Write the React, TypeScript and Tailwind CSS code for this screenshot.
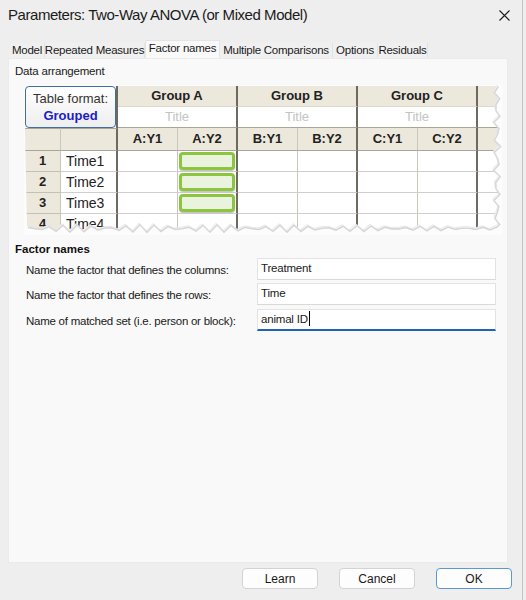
import React from "react";

const UI = "font-['Liberation_Sans',Arial,sans-serif]";
const ARIAL = "font-['Liberation_Sans',Arial,sans-serif]";

// Torn-paper edge for the sample sheet preview
function TornEdge({ w, h }: { w: number; h: number }) {
  const right: [number, number][] = [];
  const bottom: [number, number][] = [];
  const rx = w - 6;
  const by = h - 8;
  for (let y = 0; y <= by; y += 6) {
    const j = Math.sin(y * 1.7) * 2.2 + Math.cos(y * 0.63) * 1.4;
    right.push([rx + j, y]);
  }
  for (let x = rx; x >= 0; x -= 7) {
    const j = Math.sin(x * 1.3) * 2.4 + Math.cos(x * 0.41) * 1.5;
    bottom.push([x, by + j]);
  }
  const line = [...right, ...bottom];
  const inner = "M" + line.map((p) => p[0].toFixed(1) + " " + p[1].toFixed(1)).join(" L") + " L0 0 Z";
  const outer = `M-2 -2 L${w + 2} -2 L${w + 2} ${h + 2} L-2 ${h + 2} Z`;
  const edge = "M" + line.map((p) => p[0].toFixed(1) + " " + p[1].toFixed(1)).join(" L");
  return (
    <svg className="absolute left-0 top-0 pointer-events-none" width={w} height={h} viewBox={`0 0 ${w} ${h}`}>
      <path d={outer + " " + inner} fill="#fcfcfc" fillRule="evenodd" />
      <path d={edge} fill="none" stroke="#d6d6d6" strokeWidth="1.6" transform="translate(1 1.5)" />
      <path d={edge} fill="none" stroke="#e2e2e2" strokeWidth="0.8" />
    </svg>
  );
}

const thick = "border-r-2 border-r-[#6e6a5f]";
const thin = "border-r border-r-[#c9c6bd]";
const thinB = "border-b border-b-[#cfcfcf]";

function SheetPreview() {
  const sub = ["A:Y1", "A:Y2", "B:Y1", "B:Y2", "C:Y1", "C:Y2"];
  const rows = ["Time1", "Time2", "Time3", "Time4"];
  return (
    <div className="relative w-[478px] h-[150px] bg-[#fcfcfc] ml-[15px] mt-[6px] overflow-hidden">
      <div
        className={`absolute left-[1px] top-[1px] grid grid-cols-[36px_57px_60px_60px_60px_60px_60px_60px_40px] grid-rows-[21px_21px_23px_21px_21px_21px_21px] ${ARIAL}`}
      >
        {/* Table format button */}
        <div className={`col-span-2 row-span-2 ${thick} bg-[#fcfcfc]`}>
          <div className="h-full w-full rounded-[4px] border-[1.5px] border-[#3f6f9a] bg-gradient-to-b from-white to-[#eeeeee] flex flex-col items-center justify-center leading-[17px]">
            <span className="text-[13px] text-[#333]">Table format:</span>
            <span className="text-[13px] font-bold text-[#1c1cc8]">Grouped</span>
          </div>
        </div>
        {/* group headers */}
        {["Group A", "Group B", "Group C"].map((g) => (
          <div key={g} className={`col-span-2 bg-[#ece8dc] ${thick} border-b border-b-[#dcd8cc] flex items-center justify-center text-[13px] font-bold text-[#222]`}>
            {g}
          </div>
        ))}
        <div className="bg-[#ece8dc] border-b border-b-[#dcd8cc]" />
        {/* title row */}
        {[0, 1, 2].map((i) => (
          <div key={i} className={`col-span-2 bg-white ${thick} border-b border-b-[#a8a59b] flex items-center justify-center text-[13px] text-[#c4c4c4]`}>
            Title
          </div>
        ))}
        <div className="bg-white border-b border-b-[#a8a59b]" />
        {/* column header row */}
        <div className={`bg-[#ece8dc] ${thin} border-b border-b-[#a8a59b] border-t border-t-[#a8a59b]`} />
        <div className={`bg-[#ece8dc] ${thick} border-b border-b-[#a8a59b] border-t border-t-[#a8a59b]`} />
        {sub.map((s, i) => (
          <div
            key={s}
            className={`bg-[#ece8dc] ${i % 2 === 1 ? thick : thin} border-b border-b-[#a8a59b] flex items-center justify-center text-[13px] font-bold text-[#222]`}
          >
            {s}
          </div>
        ))}
        <div className="bg-[#ece8dc] border-b border-b-[#a8a59b]" />
        {/* data rows */}
        {rows.map((r, ri) => (
          <React.Fragment key={r}>
            <div className={`bg-[#ece8dc] ${thin} border-b border-b-[#c4c0b4] flex items-center justify-center text-[13px] font-bold text-[#222]`}>
              {ri + 1}
            </div>
            <div className={`bg-white ${thick} ${thinB} flex items-center pl-[5px] text-[14px] text-[#222]`}>{r}</div>
            {sub.map((s, i) => (
              <div key={s} className={`bg-white ${i % 2 === 1 ? thick : thin} ${thinB} relative`}>
                {s === "A:Y2" && ri < 3 && (
                  <div className="absolute left-[1px] top-[1px] right-[1px] bottom-[1px] rounded-[4px] border-[3px] border-[#8cc63e] bg-[#e9f3dd] shadow-[0_1px_1px_rgba(0,0,0,0.25)]" />
                )}
              </div>
            ))}
            <div className={`bg-white ${thinB}`} />
          </React.Fragment>
        ))}
      </div>
      <TornEdge w={478} h={150} />
    </div>
  );
}

function FieldRow({ label, value, focused, mt }: { label: string; value: string; focused?: boolean; mt: string }) {
  return (
    <div className={`flex items-center ${mt}`}>
      <div className="w-[248px] pl-[17px] pt-[4px] text-[11.5px] tracking-[-0.25px] whitespace-nowrap text-[#1a1a1a]">{label}</div>
      <div
        className={`w-[239px] h-[22px] bg-white border border-[#e3e3e3] ${
          focused ? "border-b-2 border-b-[#1d64b8]" : "border-b-[#d9d9d9]"
        } pl-[3px] text-[11.5px] tracking-[-0.2px] text-[#1a1a1a] leading-[16px] flex items-start pt-[1px]`}
      >
        {value}
        {focused && <span className="inline-block w-px h-[15px] bg-black ml-[1px]" />}
      </div>
    </div>
  );
}

function Btn({ children, primary }: { children: React.ReactNode; primary?: boolean }) {
  return (
    <div
      className={`w-[76px] h-[21px] rounded-[4px] bg-[#fdfdfd] border flex items-center justify-center text-[12px] text-[#1a1a1a] ${
        primary ? "border-[#5a98d6]" : "border-[#d3d3d3]"
      }`}
    >
      {children}
    </div>
  );
}

export default function App() {
  const tabs: { name: string; w: string; active?: boolean }[] = [
    { name: "Model", w: "w-[35px]" },
    { name: "Repeated Measures", w: "w-[100px]" },
    { name: "Factor names", w: "w-[75px]", active: true },
    { name: "Multiple Comparisons", w: "w-[113px]" },
    { name: "Options", w: "w-[45px]" },
    { name: "Residuals", w: "w-[50px]" },
  ];
  return (
    <div className={`relative w-[526px] h-[600px] bg-[#eeeeee] overflow-hidden ${UI}`}>
      {/* window edge */}
      <div className="absolute right-[3px] top-0 bottom-0 w-px bg-[#c4c4c4]" />

      {/* title bar */}
      <div className="h-[30px] flex items-center justify-between pl-[8px] pr-[16px]">
        <span className="text-[15px] text-[#1b1b1b] tracking-[-0.45px]">Parameters: Two-Way ANOVA (or Mixed Model)</span>
        <svg width="11" height="11" viewBox="0 0 11 11">
          <path d="M0.5 0.5 L10.5 10.5 M10.5 0.5 L0.5 10.5" stroke="#1b1b1b" strokeWidth="1.1" />
        </svg>
      </div>

      {/* tab strip */}
      <div className="h-[28px] flex items-end pl-[10px]">
        {tabs.map((t) => (
          <div
            key={t.name}
            className={`${t.w} flex items-center justify-center text-[11.5px] tracking-[-0.25px] text-[#1a1a1a] whitespace-nowrap ${
              t.active
                ? "h-[18px] bg-[#f9f9f9] border-t border-x border-[#e4e4e4] pb-[2px]"
                : "h-[15px] bg-[#f0f0f0] border-r border-[#e3e3e3] pt-[1px]"
            }`}
          >
            {t.name}
          </div>
        ))}
      </div>

      {/* tab page */}
      <div className="ml-[8px] w-[500px] h-[505px] bg-[#f9f9f9] border border-[#ebebeb] flex flex-col">
        <div className="pl-[6px] pt-[4px] text-[11.5px] tracking-[-0.2px] leading-[16px] text-[#1a1a1a]">Data arrangement</div>
        <SheetPreview />

        <div className="pl-[6px] mt-[6px] text-[11.5px] font-bold leading-[16px] text-[#111]">Factor names</div>
        <FieldRow mt="mt-[1px]" label="Name the factor that defines the columns:" value="Treatment" />
        <FieldRow mt="mt-[3px]" label="Name the factor that defines the rows:" value="Time" />
        <FieldRow mt="mt-[4px]" label="Name of matched set (i.e. person or block):" value="animal ID" focused />
      </div>

      {/* dialog buttons */}
      <div className="flex justify-end gap-[21px] pr-[14px] mt-[5px]">
        <Btn>Learn</Btn>
        <Btn>Cancel</Btn>
        <Btn primary>OK</Btn>
      </div>
    </div>
  );
}
